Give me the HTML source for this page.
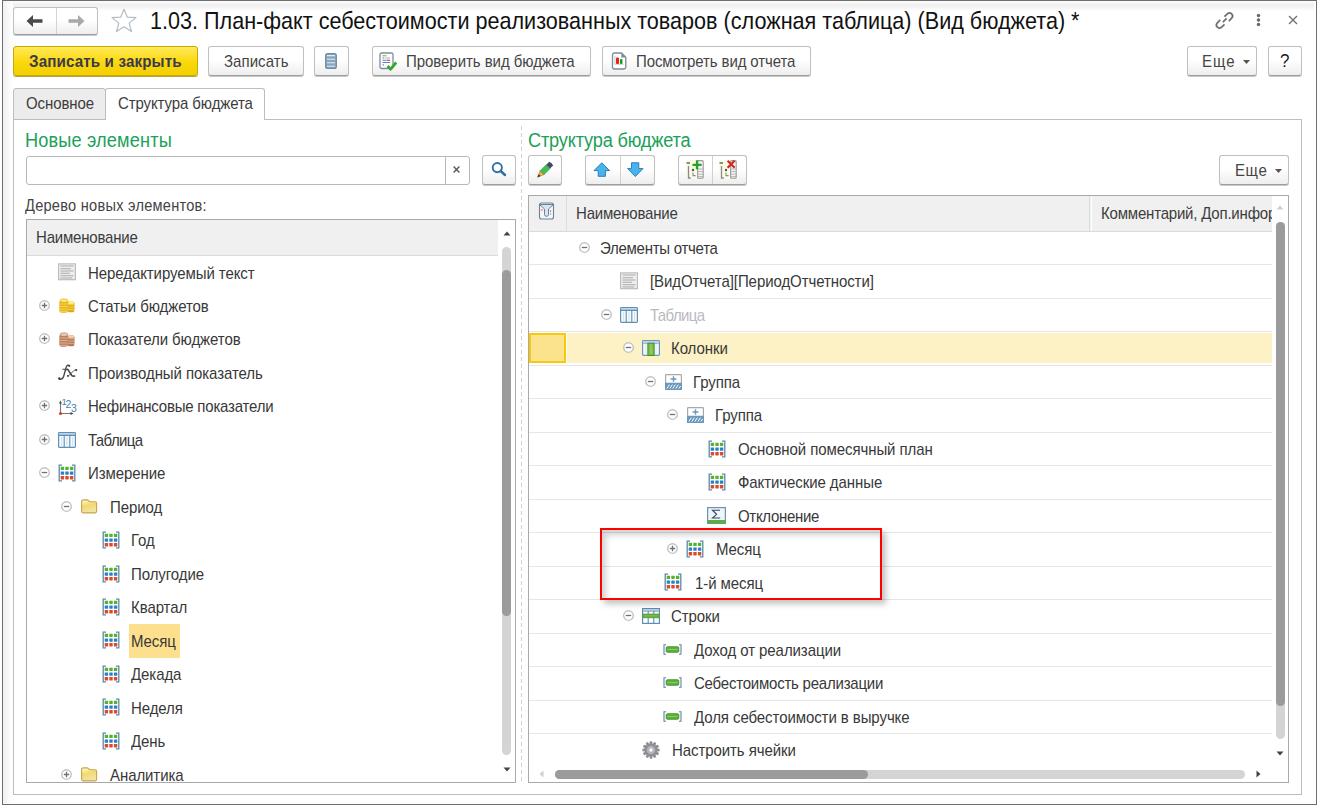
<!DOCTYPE html><html><head><meta charset="utf-8"><style>
*{margin:0;padding:0;box-sizing:border-box}
html,body{width:1317px;height:805px;overflow:hidden;background:#fff}
body{position:relative;font-family:"Liberation Sans",sans-serif;color:#333;font-size:15px}
.a{position:absolute}
.t{position:absolute;white-space:nowrap;line-height:33.47px;height:33.47px;font-size:15px;letter-spacing:-0.08px;color:#383838;transform:scaleY(1.12)}
.sy{transform:scaleY(1.12)}
.btn{position:absolute;border:1px solid #bfbfbf;border-bottom-color:#9d9d9d;border-radius:3px;background:linear-gradient(#fff 0,#fff 45%,#eeeeee 100%);box-shadow:0 1px 0 #c9c9c9}
.bt{position:absolute;white-space:nowrap;font-size:15px;line-height:28px;color:#444;letter-spacing:0.05px;transform:scaleY(1.12)}
svg{position:absolute;overflow:visible}
.rl{position:absolute;height:1px;background:#e6e6e6}
</style></head><body>
<svg width="0" height="0" style="position:absolute">
<defs>
 <symbol id="i-mx" viewBox="0 0 18 18">
  <path d="M4 1.1H1.2V16.9H4M14 1.1H16.8V16.9H14" fill="none" stroke="#5a88ae" stroke-width="1.3"/>
  <g fill="#55b22c"><rect x="2.7" y="2.7" width="3.4" height="3.3" rx="0.4"/><rect x="7.3" y="2.7" width="3.4" height="3.3" rx="0.4"/><rect x="11.9" y="2.7" width="3.4" height="3.3" rx="0.4"/></g>
  <g fill="#2a80c6"><rect x="2.7" y="7.4" width="3.4" height="3.3" rx="0.4"/><rect x="7.3" y="7.4" width="3.4" height="3.3" rx="0.4"/><rect x="11.9" y="7.4" width="3.4" height="3.3" rx="0.4"/></g>
  <g fill="#d84c2e"><rect x="2.7" y="12.1" width="3.4" height="3.3" rx="0.4"/><rect x="7.3" y="12.1" width="3.4" height="3.3" rx="0.4"/><rect x="11.9" y="12.1" width="3.4" height="3.3" rx="0.4"/></g>
 </symbol>
 <symbol id="i-txt" viewBox="0 0.7 18 17" overflow="visible">
  <rect x="0.6" y="0.6" width="16.8" height="15.8" fill="#efefef" stroke="#bcbcbc" stroke-width="1.2"/>
  <g stroke="#a9a9a9" stroke-width="1.05"><path d="M2.5 2.8H15.5M2.5 5.4H13M2.5 7.8H15.5M2.5 10H12M2.5 12.4H15.5M2.5 14.8H14.3"/></g>
 </symbol>
 <symbol id="i-tbl" viewBox="0 0 18 16">
  <rect x="0.6" y="0.6" width="16.8" height="14.8" rx="0.8" fill="#f6faff" stroke="#5f8fb5" stroke-width="1.2"/>
  <rect x="1.2" y="1.2" width="15.6" height="2" fill="#bcd3ea"/>
  <path d="M1 3.4H17M6.2 3.4V15.4M11.8 3.4V15.4" stroke="#5f8fb5" stroke-width="1.1"/>
  <path d="M3.6 5V14M9 5V14M14.6 5V14" stroke="#d5e3ef" stroke-width="1.2"/>
 </symbol>
 <symbol id="i-col" viewBox="0 0 18 16">
  <rect x="0.6" y="0.6" width="16.8" height="14.8" rx="0.8" fill="#f6faff" stroke="#6a97bd" stroke-width="1.2"/>
  <rect x="1.2" y="1.2" width="15.6" height="2.2" fill="#bcd3ea"/>
  <path d="M1 3.6H17" stroke="#7fa6c6" stroke-width="0.7"/>
  <path d="M4 5V14M14 5V14" stroke="#dbe6f0" stroke-width="1"/>
  <rect x="5.9" y="3.2" width="6.2" height="12.3" fill="#7cbf4f" stroke="#4b9226" stroke-width="1.1"/>
  <path d="M9 4.8V14" stroke="#9ad06e" stroke-width="1.2"/>
 </symbol>
 <symbol id="i-row" viewBox="0 0 18 16">
  <rect x="0.6" y="0.6" width="16.8" height="14.8" fill="#fff" stroke="#5d8db3" stroke-width="1.2"/>
  <rect x="1.2" y="1.2" width="15.6" height="1.6" fill="#b4cde2"/>
  <path d="M1 3.2H17" stroke="#5d8db3" stroke-width="0.8"/>
  <path d="M6.2 3V6M11.8 3V6M6.2 10V15M11.8 10V15" stroke="#5d8db3" stroke-width="1.1"/>
  <rect x="0.6" y="5.6" width="16.8" height="4.6" fill="#5fa83a"/>
  <path d="M2 7.9H16" stroke="#8cc66a" stroke-width="0.9"/>
 </symbol>
 <symbol id="i-grp" viewBox="0 0 17 16">
  <rect x="0.6" y="0.6" width="15.8" height="14.8" rx="0.6" fill="#fff" stroke="#a9a9a9" stroke-width="1.2"/>
  <path d="M8.5 2.2V7.8M5.6 5H11.4" stroke="#6b98bc" stroke-width="1.4"/>
  <rect x="0" y="8.8" width="17" height="7.2" rx="0.6" fill="#6b98bc"/>
  <path d="M1.8 14.6L4.4 10.6M4.8 14.6L7.4 10.6M7.8 14.6L10.4 10.6M10.8 14.6L13.4 10.6M13.8 14.6L15.6 12" stroke="#fff" stroke-width="1"/>
 </symbol>
 <symbol id="i-sum" viewBox="0 0 19 17">
  <rect x="0.6" y="0.6" width="17.8" height="15.8" fill="#eef4fa" stroke="#6b93b5" stroke-width="1.2"/>
  <rect x="0.6" y="13" width="17.8" height="3.4" fill="#5fae3b"/>
  <path d="M13 3.2H5.5L9.6 7.3L5.5 11H13.2" fill="none" stroke="#34495e" stroke-width="1.1"/>
 </symbol>
 <symbol id="i-ri" viewBox="0 0 19 11">
  <path d="M3 0.7H1V10.3H3M16 0.7H18V10.3H16" fill="none" stroke="#5b87ad" stroke-width="1.1"/>
  <rect x="3.2" y="2.7" width="12.6" height="5.6" rx="1.2" fill="#5db03a" stroke="#3d8a22" stroke-width="0.8"/>
  <path d="M4.5 5.5H14.5" stroke="#8fcf6a" stroke-width="0.9"/>
 </symbol>
 <symbol id="i-fold" viewBox="0 0 18 15">
  <defs><linearGradient id="gf" x1="0" y1="0" x2="0.3" y2="1"><stop offset="0" stop-color="#fffbd2"/><stop offset="0.5" stop-color="#f1da6e"/><stop offset="1" stop-color="#f4e2a8"/></linearGradient></defs>
  <path d="M1.6 2.6Q1.6 0.9 3.3 0.9H7.6L9.6 2.7H15.1Q16.6 2.7 16.6 4.2V12.3Q16.6 13.9 15.1 13.9H3.1Q1.6 13.9 1.6 12.3Z" fill="url(#gf)" stroke="#c9a44c" stroke-width="1.1"/>
 </symbol>
 <symbol id="i-plus" viewBox="0 0 11 11">
  <circle cx="5.5" cy="5.5" r="4.8" fill="#fff" stroke="#c2c2c2" stroke-width="1.35"/>
  <path d="M2.8 5.5H8.2M5.5 2.8V8.2" stroke="#707070" stroke-width="1.3"/>
 </symbol>
 <symbol id="i-minus" viewBox="0 0 11 11">
  <circle cx="5.5" cy="5.5" r="4.8" fill="#fff" stroke="#c2c2c2" stroke-width="1.35"/>
  <path d="M2.8 5.5H8.2" stroke="#707070" stroke-width="1.3"/>
 </symbol>

 <symbol id="i-coins" viewBox="0 0 16 15">
   <rect x="8.3" y="3.3" width="7.2" height="11" rx="2.6" fill="#e0a816"/>
   <path d="M8.6 6.8H15.2M8.6 9.2H15.2M8.6 11.6H15.2" stroke="#f7d84a" stroke-width="1"/>
   <ellipse cx="11.9" cy="4.6" rx="3.5" ry="1.7" fill="#fff07c"/>
   <rect x="0.3" y="2.2" width="8.8" height="12.6" rx="2.8" fill="#e6b01a"/>
   <path d="M0.6 6H8.8M0.6 8.5H8.8M0.6 11H8.8M0.6 13.3H8.8" stroke="#f9dc50" stroke-width="1"/>
   <ellipse cx="5" cy="2.6" rx="4" ry="1.9" fill="#fde66a" stroke="#d7a414" stroke-width="0.5"/>
 </symbol>
 <symbol id="i-coinsb" viewBox="0 0 16 15">
   <rect x="8.3" y="3.3" width="7.2" height="11" rx="2.6" fill="#b47a58"/>
   <path d="M8.6 6.8H15.2M8.6 9.2H15.2M8.6 11.6H15.2" stroke="#dcae8c" stroke-width="1"/>
   <ellipse cx="11.9" cy="4.6" rx="3.5" ry="1.7" fill="#f0cdb2"/>
   <rect x="0.3" y="2.2" width="8.8" height="12.6" rx="2.8" fill="#b8805e"/>
   <path d="M0.6 6H8.8M0.6 8.5H8.8M0.6 11H8.8M0.6 13.3H8.8" stroke="#deb092" stroke-width="1"/>
   <ellipse cx="5" cy="2.6" rx="4" ry="1.9" fill="#eec8aa" stroke="#a06848" stroke-width="0.5"/>
 </symbol>

 <symbol id="i-123" viewBox="0 0 18 17">
  <path d="M1.5 4.5V15.5H12.5" fill="none" stroke="#777" stroke-width="1.1"/>
  <path d="M0 5.5L1.5 2.5L3 5.5Z M11.5 14L14.5 15.5L11.5 17Z" fill="#3c4a58"/>
  <circle cx="1.5" cy="15.5" r="1.5" fill="#e0302a"/>
  <text x="2.6" y="6.6" font-size="9.5" font-family="Liberation Sans" fill="#4f7fa6">1</text>
  <text x="6.5" y="10.2" font-size="10.5" font-family="Liberation Sans" fill="#4f7fa6">2</text>
  <text x="12" y="13.8" font-size="10.5" font-family="Liberation Sans" fill="#4f7fa6">3</text>
 </symbol>

 <symbol id="i-gear" viewBox="0 0 18 18">
  <path d="M14.99 7.41 L17.63 7.87 L17.63 10.13 L14.99 10.59 L14.99 10.62 L17.03 12.34 L15.91 14.29 L13.39 13.38 L13.38 13.39 L14.29 15.91 L12.34 17.03 L10.62 14.99 L10.59 14.99 L10.13 17.63 L7.87 17.63 L7.41 14.99 L7.38 14.99 L5.66 17.03 L3.71 15.91 L4.62 13.39 L4.61 13.38 L2.09 14.29 L0.97 12.34 L3.01 10.62 L3.01 10.59 L0.37 10.13 L0.37 7.87 L3.01 7.41 L3.01 7.38 L0.97 5.66 L2.09 3.71 L4.61 4.62 L4.62 4.61 L3.71 2.09 L5.66 0.97 L7.38 3.01 L7.41 3.01 L7.87 0.37 L10.13 0.37 L10.59 3.01 L10.62 3.01 L12.34 0.97 L14.29 2.09 L13.38 4.61 L13.39 4.62 L15.91 3.71 L17.03 5.66 L14.99 7.38Z" fill="#8e8e96"/>
  <circle cx="9" cy="9" r="4.3" fill="#b3b3ba"/>
  <circle cx="9" cy="9" r="1.7" fill="#fff"/>
 </symbol>
</defs>
</svg>
<div class="a" style="left:2px;top:0;width:1315px;height:805px;border:1px solid #6e6e6e;border-right-color:#6e6e6e"></div>
<div class="a" style="left:3px;top:1px;width:1311px;height:10px;background:linear-gradient(#fdfdfd 0,#f0f0f0 35%,#f3f3f3 60%,#fff 100%)"></div>
<div class="a" style="left:3px;top:1px;width:10px;height:803px;background:linear-gradient(90deg,#f1f1f1,#fff)"></div>
<div class="btn" style="left:13px;top:7px;width:85px;height:28px"></div>
<div class="a" style="left:56px;top:8px;width:1px;height:26px;background:#d4d4d4"></div>
<svg style="left:26px;top:14px" width="17" height="14" viewBox="0 0 17 14"><path d="M0.5 7L7 1V5.3H16.5V8.7H7V13Z" fill="#4a4a4a"/></svg>
<svg style="left:68px;top:14px" width="17" height="14" viewBox="0 0 17 14"><path d="M16.5 7L10 1V5.3H0.5V8.7H10V13Z" fill="#a9a9a9"/></svg>
<svg style="left:110px;top:8px" width="28" height="25" viewBox="0 0 28 25"><path d="M14 1.2L17.3 9.2L26 9.6L19.2 15.1L21.5 23.6L14 18.8L6.5 23.6L8.8 15.1L2 9.6L10.7 9.2Z" fill="none" stroke="#b4bcc4" stroke-width="1.2" stroke-linejoin="round"/></svg>
<div class="a sy" style="left:150px;top:6px;font-size:21.6px;line-height:30px;color:#111;white-space:nowrap">1.03. План-факт себестоимости реализованных товаров (сложная таблица) (Вид бюджета) *</div>
<svg style="left:1213.5px;top:9.5px" width="21" height="21" viewBox="-0.5 -0.5 21 21" ><g fill="none" stroke="#707070" stroke-width="1.6" stroke-linecap="butt" transform="translate(10 10) scale(1.08) translate(-10 -10)"><path d="M8.5 11.5L12 8"/><path d="M10 6.5L12.6 3.9Q14.6 1.9 16.6 3.9Q18.6 5.9 16.6 7.9L14 10.5"/><path d="M10 13.5L7.4 16.1Q5.4 18.1 3.4 16.1Q1.4 14.1 3.4 12.1L6 9.5"/></g></svg>
<svg style="left:1255px;top:12px" width="7" height="16" viewBox="0 0 7 16"><g fill="#6a6a6a"><circle cx="3.5" cy="3.4" r="1.75"/><circle cx="3.5" cy="8" r="1.75"/><circle cx="3.5" cy="12.6" r="1.75"/></g></svg>
<svg style="left:1288px;top:15px" width="10" height="10" viewBox="0 0 10 10"><path d="M1 1L9 9M9 1L1 9" stroke="#707070" stroke-width="1.35"/></svg>
<div class="a" style="left:13px;top:46px;width:185px;height:30px;border:1px solid #c9a800;border-radius:3px;background:linear-gradient(#ffe95a,#fbd80a 55%,#f2cf00);box-shadow:0 1px 0 #b8a24a"></div>
<div class="a sy" style="left:29px;top:47px;font-weight:bold;font-size:15.2px;line-height:28px;color:#3a3a4e;white-space:nowrap;letter-spacing:0.12px">Записать и закрыть</div>
<div class="btn" style="left:208px;top:46px;width:96px;height:30px"></div>
<div class="bt" style="left:224px;top:47px">Записать</div>
<div class="btn" style="left:314px;top:46px;width:35px;height:30px"></div>
<svg style="left:325px;top:53px" width="12" height="16" viewBox="0 0 12 16"><rect x="0.6" y="0.6" width="10.8" height="14.8" rx="2" fill="#8aa6bf" stroke="#6d8ca8" stroke-width="1.1"/><path d="M2 2.6H10M2 6.2H10M2 9.8H10M2 13.2H10" stroke="#e2ebf3" stroke-width="1.1"/></svg>
<div class="btn" style="left:372px;top:46px;width:219px;height:30px"></div>
<svg style="left:379px;top:52px" width="19" height="19" viewBox="0 0 19 19"><rect x="1" y="1" width="13" height="15.5" rx="1.6" fill="#fff" stroke="#808b97" stroke-width="1.3"/><path d="M3.5 3.8H7.5" stroke="#4fb84a" stroke-width="1"/><path d="M3.5 6H5.3" stroke="#f08070" stroke-width="1.4"/><path d="M6.3 6H11" stroke="#8ab8e0" stroke-width="1"/><path d="M3.5 8.3H7" stroke="#4a88c8" stroke-width="1"/><path d="M7.5 8.3H11" stroke="#e84a3a" stroke-width="1.2"/><path d="M3.5 10.5H11" stroke="#4a88c8" stroke-width="1"/><path d="M3.5 12.8H5" stroke="#6a98c8" stroke-width="1.2"/><path d="M8.6 14L11.6 17.2L17.2 10.5" fill="none" stroke="#36a832" stroke-width="2.8" stroke-linejoin="round"/></svg>
<div class="bt" style="left:406px;top:47px;letter-spacing:-0.05px">Проверить вид бюджета</div>
<div class="btn" style="left:602px;top:46px;width:209px;height:30px"></div>
<svg style="left:610.5px;top:52px" width="17" height="18" viewBox="0 0 17 18"><path d="M1.5 3Q1.5 1 3.5 1H10.5L14.8 5.3V15.2Q14.8 17 13 17H3.3Q1.5 17 1.5 15.2Z" fill="#fff" stroke="#7f8b97" stroke-width="1.3"/><path d="M10.3 1V5.5H14.8Z" fill="#7f8b97"/><path d="M3.9 3.8V12.2H12.5" fill="none" stroke="#a9bcc8" stroke-width="0.8"/><rect x="5" y="5.6" width="3" height="6.4" rx="1" fill="#ea1c1c"/><rect x="8.9" y="7" width="2.6" height="5" rx="1" fill="#16a016"/></svg>
<div class="bt" style="left:636px;top:47px;letter-spacing:-0.12px">Посмотреть вид отчета</div>
<div class="btn" style="left:1187px;top:46px;width:70px;height:30px"></div>
<div class="bt" style="left:1202px;top:47px;letter-spacing:1px">Еще</div>
<svg style="left:1243px;top:60px" width="7" height="4" viewBox="0 0 7 4"><path d="M0 0H7L3.5 4Z" fill="#555"/></svg>
<div class="btn" style="left:1268px;top:46px;width:34px;height:30px"></div>
<div class="bt" style="left:1280px;top:47px;color:#1a1a1a;font-size:17px">?</div>
<div class="a" style="left:13px;top:119px;width:1289px;height:676px;border:1px solid #bdbdbd"></div>
<div class="a" style="left:13px;top:88px;width:93px;height:32px;border:1px solid #bdbdbd;border-radius:3px 3px 0 0;background:#ececec"></div>
<div class="a" style="left:105px;top:88px;width:160px;height:32px;border:1px solid #bdbdbd;border-bottom:none;border-radius:3px 3px 0 0;background:#fff"></div>
<div class="a sy" style="left:26px;top:87.6px;font-size:15px;line-height:30px;color:#3c3c3c;white-space:nowrap;letter-spacing:-0.1px">Основное</div>
<div class="a sy" style="left:118px;top:87.6px;font-size:15px;line-height:30px;color:#3c3c3c;white-space:nowrap;letter-spacing:-0.1px">Структура бюджета</div>
<div class="a sy" style="left:25px;top:125.5px;font-size:18.2px;line-height:28px;color:#1ba15a;white-space:nowrap;letter-spacing:0.15px">Новые элементы</div>
<div class="a" style="left:26px;top:156px;width:444px;height:29px;border:1px solid #b9b9b9;border-radius:3px;background:#fff"></div>
<div class="a" style="left:444.5px;top:157px;width:1.2px;height:27px;background:#b8b8b8"></div>
<svg style="left:453px;top:165.5px" width="7" height="7" viewBox="0 0 7 7"><path d="M0.6 0.6L6.4 6.4M6.4 0.6L0.6 6.4" stroke="#5a5a5a" stroke-width="1.45"/></svg>
<div class="btn" style="left:482px;top:154.5px;width:34px;height:30.5px"></div>
<svg style="left:491px;top:161px" width="16" height="16" viewBox="0 0 16 16"><circle cx="6.3" cy="6.6" r="4.6" fill="none" stroke="#2f70a6" stroke-width="1.9"/><path d="M9.7 10L14 14" stroke="#2f70a6" stroke-width="2.5" stroke-linecap="round"/></svg>
<div class="a sy" style="left:25px;top:193px;font-size:14.6px;line-height:24px;color:#444;white-space:nowrap;letter-spacing:0.25px">Дерево новых элементов:</div>
<div class="a" style="left:26px;top:219px;width:490px;height:564px;border:1px solid #a9a9a9;background:#fff;overflow:hidden" id="lt">
</div>
<div class="a" style="left:27px;top:220px;width:471px;height:35px;background:#f0f0f0"></div>
<div class="a" style="left:27px;top:255px;width:471px;height:1px;background:#dadada"></div>
<div class="a sy" style="left:36px;top:219px;font-size:15px;line-height:35px;color:#3c3c3c;white-space:nowrap;letter-spacing:-0.2px">Наименование</div>
<svg style="left:503px;top:231px" width="8" height="5" viewBox="0 0 8 5"><path d="M0.5 4.5H7.5L4 0.5Z" fill="#444"/></svg>
<div class="a" style="left:502px;top:247px;width:9px;height:508px;border-radius:4.5px;background:#d4d4d4"></div>
<div class="a" style="left:502px;top:270px;width:9px;height:346px;border-radius:4.5px;background:#9b9b9b"></div>
<svg style="left:503px;top:767px" width="8" height="5" viewBox="0 0 8 5"><path d="M0.5 0.5H7.5L4 4.5Z" fill="#444"/></svg>
<div class="a" style="left:27px;top:256px;width:475px;height:526px;overflow:hidden">
<svg style="left:31px;top:7.7px" width="18" height="17"><use href="#i-txt"/></svg>
<div class="t" style="left:61px;top:-0.50px;">Нередактируемый текст</div>
<svg style="left:12px;top:43.9px" width="11" height="11"><use href="#i-plus"/></svg>
<svg style="left:32px;top:42.2px" width="16" height="15"><use href="#i-coins"/></svg>
<div class="t" style="left:61px;top:32.97px;">Статьи бюджетов</div>
<svg style="left:12px;top:77.4px" width="11" height="11"><use href="#i-plus"/></svg>
<svg style="left:32px;top:75.7px" width="16" height="15"><use href="#i-coinsb"/></svg>
<div class="t" style="left:61px;top:66.44px;">Показатели бюджетов</div>
<svg style="left:23px;top:99.0px" width="35" height="35" viewBox="0 0 35 35"><g fill="none" stroke="#484848" stroke-linecap="round"><path d="M19.1 10.6Q17.8 9.4 16.6 11.2Q16 12.3 15.6 14.3L13.6 21.5Q12.4 24.6 9.8 24.3" stroke-width="1.35"/><path d="M12.8 14.3H17.6" stroke-width="1.1"/><g transform="translate(0.8 0)"><path d="M15.8 14.6Q17 14 17.8 15.6L20.8 20.2Q21.8 21.6 23.8 21" stroke-width="1.6"/><path d="M25.6 14.9Q24.5 14.2 22.8 15.8L18.8 20Q17.8 21.2 16.8 21" stroke-width="0.9"/></g></g><g fill="#404040"><circle cx="19.2" cy="10.8" r="1.1"/><circle cx="9.3" cy="23.6" r="1.25"/><circle cx="26.2" cy="15.1" r="1.1"/><circle cx="18" cy="20.9" r="0.9"/></g></svg>
<div class="t" style="left:61px;top:99.91px;">Производный показатель</div>
<svg style="left:12px;top:144.3px" width="11" height="11"><use href="#i-plus"/></svg>
<svg style="left:32px;top:141.6px" width="18" height="17"><use href="#i-123"/></svg>
<div class="t" style="left:61px;top:133.38px;letter-spacing:-0.21px">Нефинансовые показатели</div>
<svg style="left:12px;top:177.8px" width="11" height="11"><use href="#i-plus"/></svg>
<svg style="left:31px;top:175.6px" width="18" height="16"><use href="#i-tbl"/></svg>
<div class="t" style="left:61px;top:166.85px;letter-spacing:-0.62px">Таблица</div>
<svg style="left:12px;top:211.3px" width="11" height="11"><use href="#i-minus"/></svg>
<svg style="left:31px;top:208.1px" width="18" height="18"><use href="#i-mx"/></svg>
<div class="t" style="left:61px;top:200.32px;">Измерение</div>
<svg style="left:34px;top:244.7px" width="11" height="11"><use href="#i-minus"/></svg>
<svg style="left:53px;top:243.0px" width="18" height="15"><use href="#i-fold"/></svg>
<div class="t" style="left:83px;top:233.79px;">Период</div>
<svg style="left:75px;top:275.0px" width="18" height="18"><use href="#i-mx"/></svg>
<div class="t" style="left:104px;top:267.26px;">Год</div>
<svg style="left:75px;top:308.5px" width="18" height="18"><use href="#i-mx"/></svg>
<div class="t" style="left:104px;top:300.73px;">Полугодие</div>
<svg style="left:75px;top:341.9px" width="18" height="18"><use href="#i-mx"/></svg>
<div class="t" style="left:104px;top:334.20px;">Квартал</div>
<div class="a" style="left:102px;top:368px;width:51px;height:34px;background:#fde08e"></div>
<svg style="left:75px;top:375.4px" width="18" height="18"><use href="#i-mx"/></svg>
<div class="t" style="left:104px;top:367.67px;">Месяц</div>
<svg style="left:75px;top:408.9px" width="18" height="18"><use href="#i-mx"/></svg>
<div class="t" style="left:104px;top:401.14px;">Декада</div>
<svg style="left:75px;top:442.3px" width="18" height="18"><use href="#i-mx"/></svg>
<div class="t" style="left:104px;top:434.61px;">Неделя</div>
<svg style="left:75px;top:475.8px" width="18" height="18"><use href="#i-mx"/></svg>
<div class="t" style="left:104px;top:468.08px;">День</div>
<svg style="left:34px;top:512.5px" width="11" height="11"><use href="#i-plus"/></svg>
<svg style="left:53px;top:510.8px" width="18" height="15"><use href="#i-fold"/></svg>
<div class="t" style="left:83px;top:501.55px;">Аналитика</div>
</div>
<div class="a" style="left:521px;top:126px;width:1px;height:656px;background:repeating-linear-gradient(#d2d2d2 0 4px,transparent 4px 7px)"></div>
<div class="a sy" style="left:528px;top:125.5px;font-size:18.2px;line-height:28px;color:#1ba15a;white-space:nowrap;letter-spacing:-0.18px">Структура бюджета</div>
<div class="btn" style="left:528px;top:155px;width:34px;height:30px"></div>
<svg style="left:532px;top:158px" width="26" height="26" viewBox="0 0 26 26"><path d="M5.50 19.20 L8.21 12.70 L12.01 16.54Z" fill="#f4b54a" stroke="#b07830" stroke-width="0.7"/><path d="M5.50 19.20 L6.78 16.23 L8.47 17.94Z" fill="#3a2a1a"/><path d="M8.21 12.70 L14.24 6.71 L18.05 10.55 L12.01 16.54Z" fill="#43bd55" stroke="#2d8a3a" stroke-width="0.6"/><path d="M14.24 6.71 L17.33 3.65 Q20.01 4.79 21.13 7.48 L18.05 10.55Z" fill="#3f4a5e"/></svg>
<div class="btn" style="left:585px;top:155px;width:70px;height:30px"></div>
<div class="a" style="left:620px;top:156px;width:1px;height:28px;background:#d0d0d0"></div>
<svg style="left:592px;top:161px" width="20" height="18" viewBox="0 0 20 18"><path d="M9.8 1.8L17.6 9.6H13.4V15.3H6.2V9.6H2Z" fill="#4ab2ec" stroke="#2a7fbf" stroke-width="1" stroke-linejoin="round"/></svg>
<svg style="left:626px;top:161px" width="20" height="18" viewBox="0 0 20 18"><path d="M5.5 1.8H12.8V7.6H17L9.3 15.5L1.6 7.6H5.5Z" fill="#4ab2ec" stroke="#2a7fbf" stroke-width="1" stroke-linejoin="round"/></svg>
<div class="btn" style="left:678px;top:155px;width:69px;height:30px"></div>
<div class="a" style="left:712px;top:156px;width:1px;height:28px;background:#d0d0d0"></div>
<svg style="left:682px;top:157px" width="22" height="22" viewBox="0 0 22 22"><rect x="4" y="3" width="10.5" height="18.5" fill="#fdfaea"/><path d="M4.5 6H8" stroke="#2f6a2f" stroke-width="1.3"/><path d="M6.5 9V21H8.8" fill="none" stroke="#8a8a8a" stroke-width="1.3"/><circle cx="11" cy="13" r="1.2" fill="#2f6a2f"/><path d="M11 15.5V18.6H13.6" fill="none" stroke="#8a8a8a" stroke-width="1.1"/><rect x="15.6" y="3.6" width="5.6" height="17.6" rx="1" fill="#f4f4f4" stroke="#9a9a9a" stroke-width="1.1"/><path d="M15.6 12H21.2M15.6 14.6H21.2M15.6 17.2H21.2M15.6 19.6H21.2" stroke="#b0b0b0" stroke-width="0.9"/><path d="M15 3.2V12.2M10.5 7.8H19.6" stroke="#22a324" stroke-width="2.3"/></svg>
<svg style="left:715px;top:157px" width="22" height="22" viewBox="0 0 22 22"><rect x="4" y="3" width="10.5" height="18.5" fill="#fdfaea"/><path d="M4.5 6H8" stroke="#2f6a2f" stroke-width="1.3"/><path d="M6.5 9V21H8.8" fill="none" stroke="#8a8a8a" stroke-width="1.3"/><circle cx="11" cy="13" r="1.2" fill="#2f6a2f"/><path d="M11 15.5V18.6H13.6" fill="none" stroke="#8a8a8a" stroke-width="1.1"/><rect x="15.6" y="3.6" width="5.6" height="17.6" rx="1" fill="#f4f4f4" stroke="#9a9a9a" stroke-width="1.1"/><path d="M15.6 12H21.2M15.6 14.6H21.2M15.6 17.2H21.2M15.6 19.6H21.2" stroke="#b0b0b0" stroke-width="0.9"/><path d="M12.6 3.8L19.6 10.8M19.6 3.8L12.6 10.8" stroke="#d42a1e" stroke-width="2.2"/></svg>
<div class="btn" style="left:1219px;top:155px;width:70px;height:30px"></div>
<div class="bt" style="left:1235px;top:156px;letter-spacing:0.6px">Еще</div>
<svg style="left:1275px;top:169px" width="7" height="4" viewBox="0 0 7 4"><path d="M0 0H7L3.5 4Z" fill="#555"/></svg>
<div class="a" style="left:528px;top:195px;width:761px;height:588px;border:1px solid #a9a9a9;background:#fff"></div>
<div class="a" style="left:529px;top:196px;width:743px;height:35px;background:#f0f0f0"></div>
<div class="a" style="left:529px;top:231px;width:743px;height:1px;background:#dadada"></div>
<div class="a" style="left:566px;top:196px;width:1px;height:35px;background:#dcdcdc"></div>
<div class="a" style="left:1089px;top:196px;width:1px;height:35px;background:#dcdcdc"></div>
<div class="a" style="left:1091px;top:196px;width:1px;height:35px;background:#ffffff"></div>
<svg style="left:538px;top:202px" width="17" height="18" viewBox="0 0 17 18"><path d="M1.5 3Q1.5 1 3.5 1H13.5Q15.5 1 15.5 3V15Q15.5 17 13.5 17H3.5Q1.5 17 1.5 15Z" fill="#f4f7fa" stroke="#6c8195" stroke-width="1.1"/><path d="M1.5 2.5H15.5L10.5 7V12.5Q10.5 14.3 8.5 14.3Q6.5 14.3 6.5 12.5V7Z" fill="#dde5ec" stroke="#6c8195" stroke-width="1"/><circle cx="4" cy="8" r="0.8" fill="#e44"/><circle cx="12.5" cy="9" r="0.8" fill="#e44"/><circle cx="12.5" cy="12" r="0.8" fill="#6ad"/></svg>
<div class="a sy" style="left:576px;top:195px;font-size:15px;line-height:35px;color:#3c3c3c;white-space:nowrap;letter-spacing:-0.2px">Наименование</div>
<div class="a" style="left:1092px;top:196px;width:180px;height:35px;overflow:hidden"><div class="sy" style="position:absolute;left:9px;top:-1px;font-size:15px;line-height:35px;color:#3c3c3c;white-space:nowrap;letter-spacing:-0.2px">Комментарий, Доп.информация</div></div>
<div class="rl" style="left:529px;top:264px;width:743px"></div>
<div class="rl" style="left:529px;top:298px;width:743px"></div>
<div class="rl" style="left:529px;top:331px;width:743px"></div>
<div class="rl" style="left:529px;top:365px;width:743px"></div>
<div class="rl" style="left:529px;top:398px;width:743px"></div>
<div class="rl" style="left:529px;top:432px;width:743px"></div>
<div class="rl" style="left:529px;top:465px;width:743px"></div>
<div class="rl" style="left:529px;top:499px;width:743px"></div>
<div class="rl" style="left:529px;top:532px;width:743px"></div>
<div class="rl" style="left:529px;top:566px;width:743px"></div>
<div class="rl" style="left:529px;top:599px;width:743px"></div>
<div class="rl" style="left:529px;top:633px;width:743px"></div>
<div class="rl" style="left:529px;top:666px;width:743px"></div>
<div class="rl" style="left:529px;top:700px;width:743px"></div>
<div class="rl" style="left:529px;top:733px;width:743px"></div>
<div class="a" style="left:567px;top:333px;width:705px;height:30px;background:#fdf1c6"></div>
<div class="a" style="left:529px;top:333px;width:37px;height:30px;border:2px solid #f8c80c;background:#fbe38d"></div>
<div class="a" style="left:529px;top:232px;width:743px;height:536px;overflow:hidden">
<svg style="left:50px;top:9.9px" width="11" height="11"><use href="#i-minus"/></svg>
<div class="t" style="left:71px;top:-1.00px;letter-spacing:-0.27px">Элементы отчета</div>
<svg style="left:91px;top:40.7px" width="18" height="17"><use href="#i-txt"/></svg>
<div class="t" style="left:121px;top:32.47px;">[ВидОтчета][ПериодОтчетности]</div>
<svg style="left:72px;top:76.9px" width="11" height="11"><use href="#i-minus"/></svg>
<svg style="left:91px;top:74.7px" width="18" height="16"><use href="#i-tbl"/></svg>
<div class="t" style="left:121px;top:65.94px;color:#b9b9c2;letter-spacing:-0.62px">Таблица</div>
<svg style="left:94px;top:110.3px" width="11" height="11"><use href="#i-minus"/></svg>
<svg style="left:113px;top:108.1px" width="18" height="16"><use href="#i-col"/></svg>
<div class="t" style="left:142px;top:99.41px;">Колонки</div>
<svg style="left:116px;top:143.8px" width="11" height="11"><use href="#i-minus"/></svg>
<svg style="left:136px;top:141.6px" width="17" height="16"><use href="#i-grp"/></svg>
<div class="t" style="left:164px;top:132.88px;">Группа</div>
<svg style="left:138px;top:177.3px" width="11" height="11"><use href="#i-minus"/></svg>
<svg style="left:158px;top:175.1px" width="17" height="16"><use href="#i-grp"/></svg>
<div class="t" style="left:186px;top:166.35px;">Группа</div>
<svg style="left:179px;top:207.6px" width="18" height="18"><use href="#i-mx"/></svg>
<div class="t" style="left:209px;top:199.82px;">Основной помесячный план</div>
<svg style="left:179px;top:241.0px" width="18" height="18"><use href="#i-mx"/></svg>
<div class="t" style="left:209px;top:233.29px;">Фактические данные</div>
<svg style="left:178px;top:275.0px" width="19" height="17"><use href="#i-sum"/></svg>
<div class="t" style="left:209px;top:266.76px;letter-spacing:-0.32px">Отклонение</div>
<svg style="left:138px;top:311.2px" width="11" height="11"><use href="#i-plus"/></svg>
<svg style="left:157px;top:308.0px" width="18" height="18"><use href="#i-mx"/></svg>
<div class="t" style="left:187px;top:300.23px;">Месяц</div>
<svg style="left:135px;top:341.4px" width="18" height="18"><use href="#i-mx"/></svg>
<div class="t" style="left:166px;top:333.70px;">1-й месяц</div>
<svg style="left:94px;top:378.1px" width="11" height="11"><use href="#i-minus"/></svg>
<svg style="left:113px;top:375.9px" width="18" height="16"><use href="#i-row"/></svg>
<div class="t" style="left:142px;top:367.17px;">Строки</div>
<svg style="left:134px;top:411.9px" width="19" height="11"><use href="#i-ri"/></svg>
<div class="t" style="left:165px;top:400.64px;">Доход от реализации</div>
<svg style="left:134px;top:445.3px" width="19" height="11"><use href="#i-ri"/></svg>
<div class="t" style="left:165px;top:434.11px;letter-spacing:-0.22px">Себестоимость реализации</div>
<svg style="left:134px;top:478.8px" width="19" height="11"><use href="#i-ri"/></svg>
<div class="t" style="left:165px;top:467.58px;">Доля себестоимости в выручке</div>
<svg style="left:113px;top:508.8px" width="18" height="18"><use href="#i-gear"/></svg>
<div class="t" style="left:143px;top:501.05px;">Настроить ячейки</div>
</div>
<div class="a" style="left:600px;top:528px;width:282px;height:72px;border:2px solid #f00;box-shadow:4px 4px 6px rgba(0,0,0,.24), inset 4px 5px 6px rgba(0,0,0,.18)"></div>
<svg style="left:1276px;top:205px" width="8" height="5" viewBox="0 0 8 5"><path d="M0.5 4.5H7.5L4 0.5Z" fill="#cfcfcf"/></svg>
<div class="a" style="left:1276px;top:222px;width:9px;height:517px;border-radius:4.5px;background:#d4d4d4"></div>
<div class="a" style="left:1276px;top:222px;width:9px;height:484px;border-radius:4.5px;background:#9b9b9b"></div>
<svg style="left:1276px;top:751px" width="8" height="5" viewBox="0 0 8 5"><path d="M0.5 0.5H7.5L4 4.5Z" fill="#444"/></svg>
<svg style="left:539px;top:770px" width="5" height="8" viewBox="0 0 5 8"><path d="M4.5 0.5V7.5L0.5 4Z" fill="#cfcfcf"/></svg>
<div class="a" style="left:555px;top:770px;width:690px;height:9px;border-radius:4.5px;background:#d4d4d4"></div>
<div class="a" style="left:555px;top:770px;width:313px;height:9px;border-radius:4.5px;background:#9b9b9b"></div>
<svg style="left:1256px;top:770px" width="5" height="8" viewBox="0 0 5 8"><path d="M0.5 0.5V7.5L4.5 4Z" fill="#444"/></svg></body></html>
